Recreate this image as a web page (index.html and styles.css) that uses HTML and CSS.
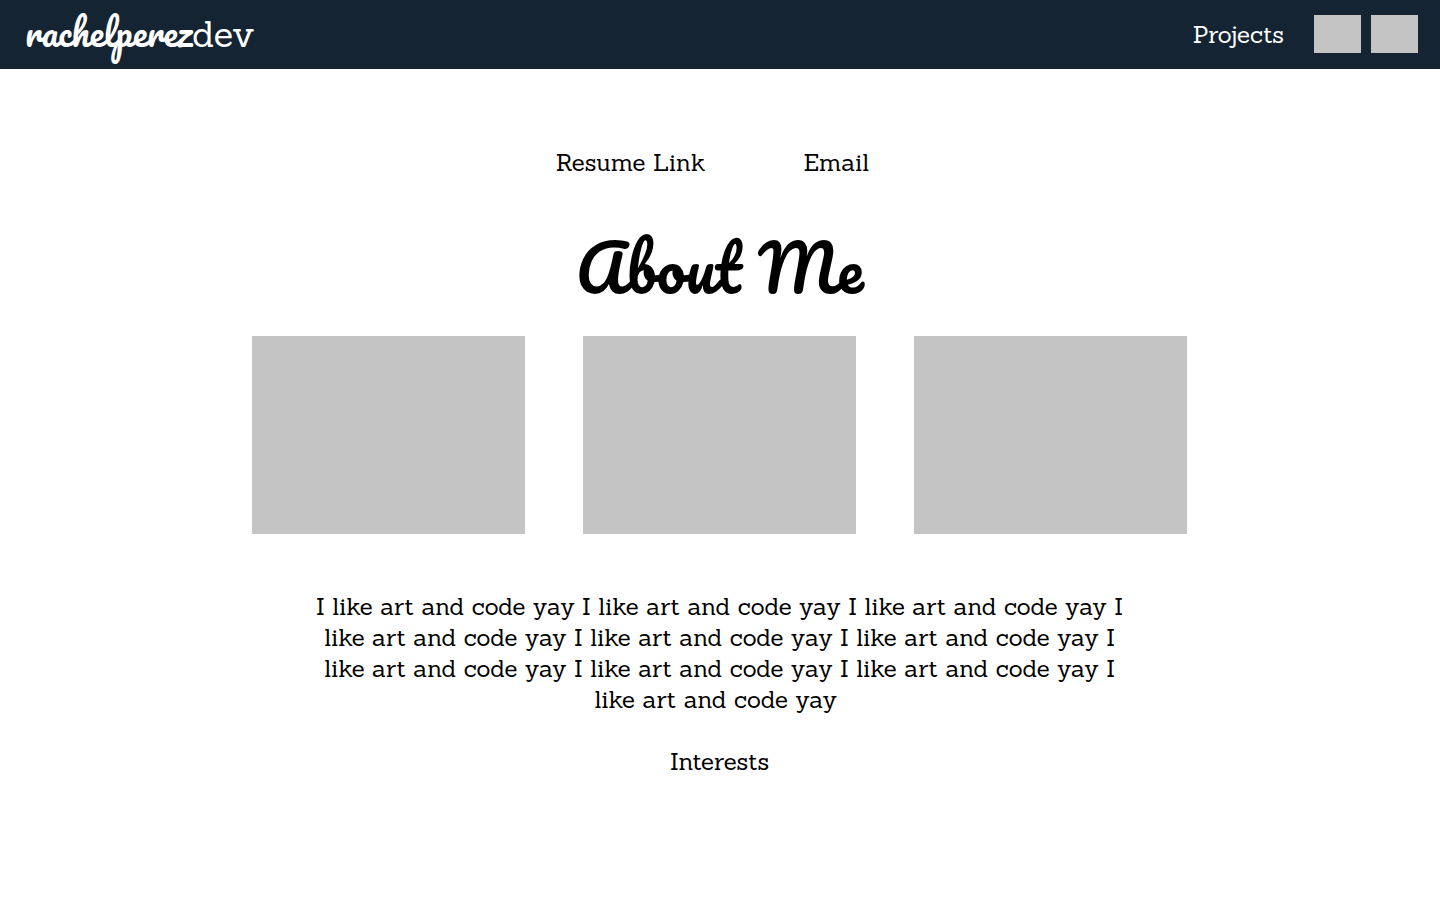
FILE: index.html
```html
<!DOCTYPE html>
<html lang="en">
<head>
<meta charset="utf-8">
<meta name="viewport" content="width=device-width, initial-scale=1">
<title>rachelperezdev</title>
<link rel="stylesheet" href="styles.css">
</head>
<body>
<header class="topbar">
  <a class="brand" href="#"><span class="brand-name">rachelperez</span><span class="brand-suffix">dev</span></a>
  <nav class="topnav">
    <a class="topnav-link" href="#">Projects</a>
    <div class="badges">
      <a class="badge" href="#" aria-label="Profile one"></a>
      <a class="badge" href="#" aria-label="Profile two"></a>
    </div>
  </nav>
</header>
<main class="page">
  <nav class="contact">
    <a href="#">Resume Link</a>
    <a href="#">Email</a>
  </nav>
  <h1 class="title">About Me</h1>
  <div class="gallery">
    <div class="photo"></div>
    <div class="photo"></div>
    <div class="photo"></div>
  </div>
  <p class="bio">I like art and code yay I like art and code yay I like art and code yay I like art and code yay I like art and code yay I like art and code yay I like art and code yay I like art and code yay I like art and code yay I like art and code yay&nbsp;</p>
  <h2 class="interests">Interests</h2>
</main>
</body>
</html>
```
FILE: styles.css
```css
* {
  box-sizing: border-box;
}

body {
  margin: 0;
  background: #fff;
  color: #000;
  font-family: "Sanchez", "DejaVu Serif", serif;
  font-size: 24px;
  line-height: 31px;
}

a {
  color: inherit;
  text-decoration: none;
}

.topbar {
  display: flex;
  align-items: center;
  justify-content: space-between;
  min-height: 69px;
  padding: 0 22px 1px 25px;
  background: #142433;
  color: #fff;
}

.brand {
  display: flex;
  align-items: baseline;
  padding-bottom: 2px;
  font-size: 36px;
  line-height: 48px;
}

.brand-name {
  font-family: "Pacifico", cursive;
}

.topnav {
  display: flex;
  align-items: center;
  gap: 30px;
}

.badges {
  display: flex;
  gap: 10px;
}

.badge {
  width: 47px;
  height: 38px;
  background: #c4c4c4;
}

.page {
  padding: 78px 25px 48px 24px;
  text-align: center;
}

.contact {
  display: flex;
  justify-content: center;
  gap: 98px;
  padding-right: 14px;
}

.title {
  margin: 47px 0 27px;
  font-family: "Pacifico", cursive;
  font-size: 64px;
  font-weight: 400;
  line-height: 84px;
}

.gallery {
  display: grid;
  grid-template-columns: repeat(3, 1fr);
  gap: 58px;
  max-width: 935px;
  margin: 0 auto;
}

.photo {
  min-height: 198px;
  background: #c4c4c4;
}

.bio {
  max-width: 821px;
  margin: 57px auto 31px;
}

.interests {
  margin: 0;
  font-size: inherit;
  font-weight: 400;
}
```
